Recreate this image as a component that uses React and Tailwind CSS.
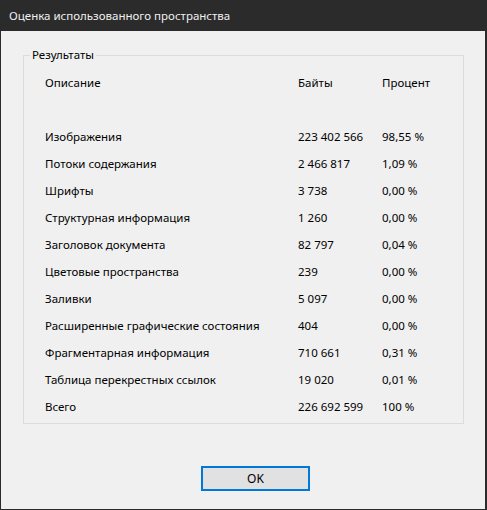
const ROWS = [
  ['Изображения', '223 402 566', '98,55 %'],
  ['Потоки содержания', '2 466 817', '1,09 %'],
  ['Шрифты', '3 738', '0,00 %'],
  ['Структурная информация', '1 260', '0,00 %'],
  ['Заголовок документа', '82 797', '0,04 %'],
  ['Цветовые пространства', '239', '0,00 %'],
  ['Заливки', '5 097', '0,00 %'],
  ['Расширенные графические состояния', '404', '0,00 %'],
  ['Фрагментарная информация', '710 661', '0,31 %'],
  ['Таблица перекрестных ссылок', '19 020', '0,01 %'],
  ['Всего', '226 692 599', '100 %'],
];

const App = () => {
  return (
    <div
      className="w-[487px] h-[510px] flex flex-col bg-[#2b2b2b] text-[11.5px] text-black"
      style={{ fontFamily: '"Noto Sans", "Open Sans", sans-serif' }}
    >
      {/* Title bar */}
      <div className="h-[31px] flex items-center pl-[9px] text-[11.5px] text-[#f0f0f0] shrink-0">
        Оценка использованного пространства
      </div>

      {/* Dialog body */}
      <div className="flex-1 ml-[1px] mr-[2px] mb-[1px] bg-[#f0f0f0] flex flex-col">
        {/* Results group */}
        <div className="relative ml-[22px] mt-[24px] w-[441px] h-[369px] border border-[#dcdcdc] pt-[13px] pl-[21px]">
          <span className="absolute -top-[9px] left-[6px] px-[2px] bg-[#f0f0f0] leading-[16px]">
            Результаты
          </span>
          <div className="grid grid-cols-[253px_84px_1fr] auto-rows-[27px] items-center">
            <div>Описание</div>
            <div>Байты</div>
            <div>Процент</div>
            <div className="col-span-3" />
            {ROWS.map(([name, bytes, pct]) => (
              <div key={name} className="contents">
                <div>{name}</div>
                <div>{bytes}</div>
                <div>{pct}</div>
              </div>
            ))}
          </div>
        </div>

        {/* Footer */}
        <div className="flex mt-[42px] pl-[200px]">
          <button className="w-[109px] h-[25px] bg-[#e1e1e1] border-2 border-[#0078d7] flex items-center justify-center text-[12px]">
            OK
          </button>
        </div>
      </div>
    </div>
  );
};

export default App;
